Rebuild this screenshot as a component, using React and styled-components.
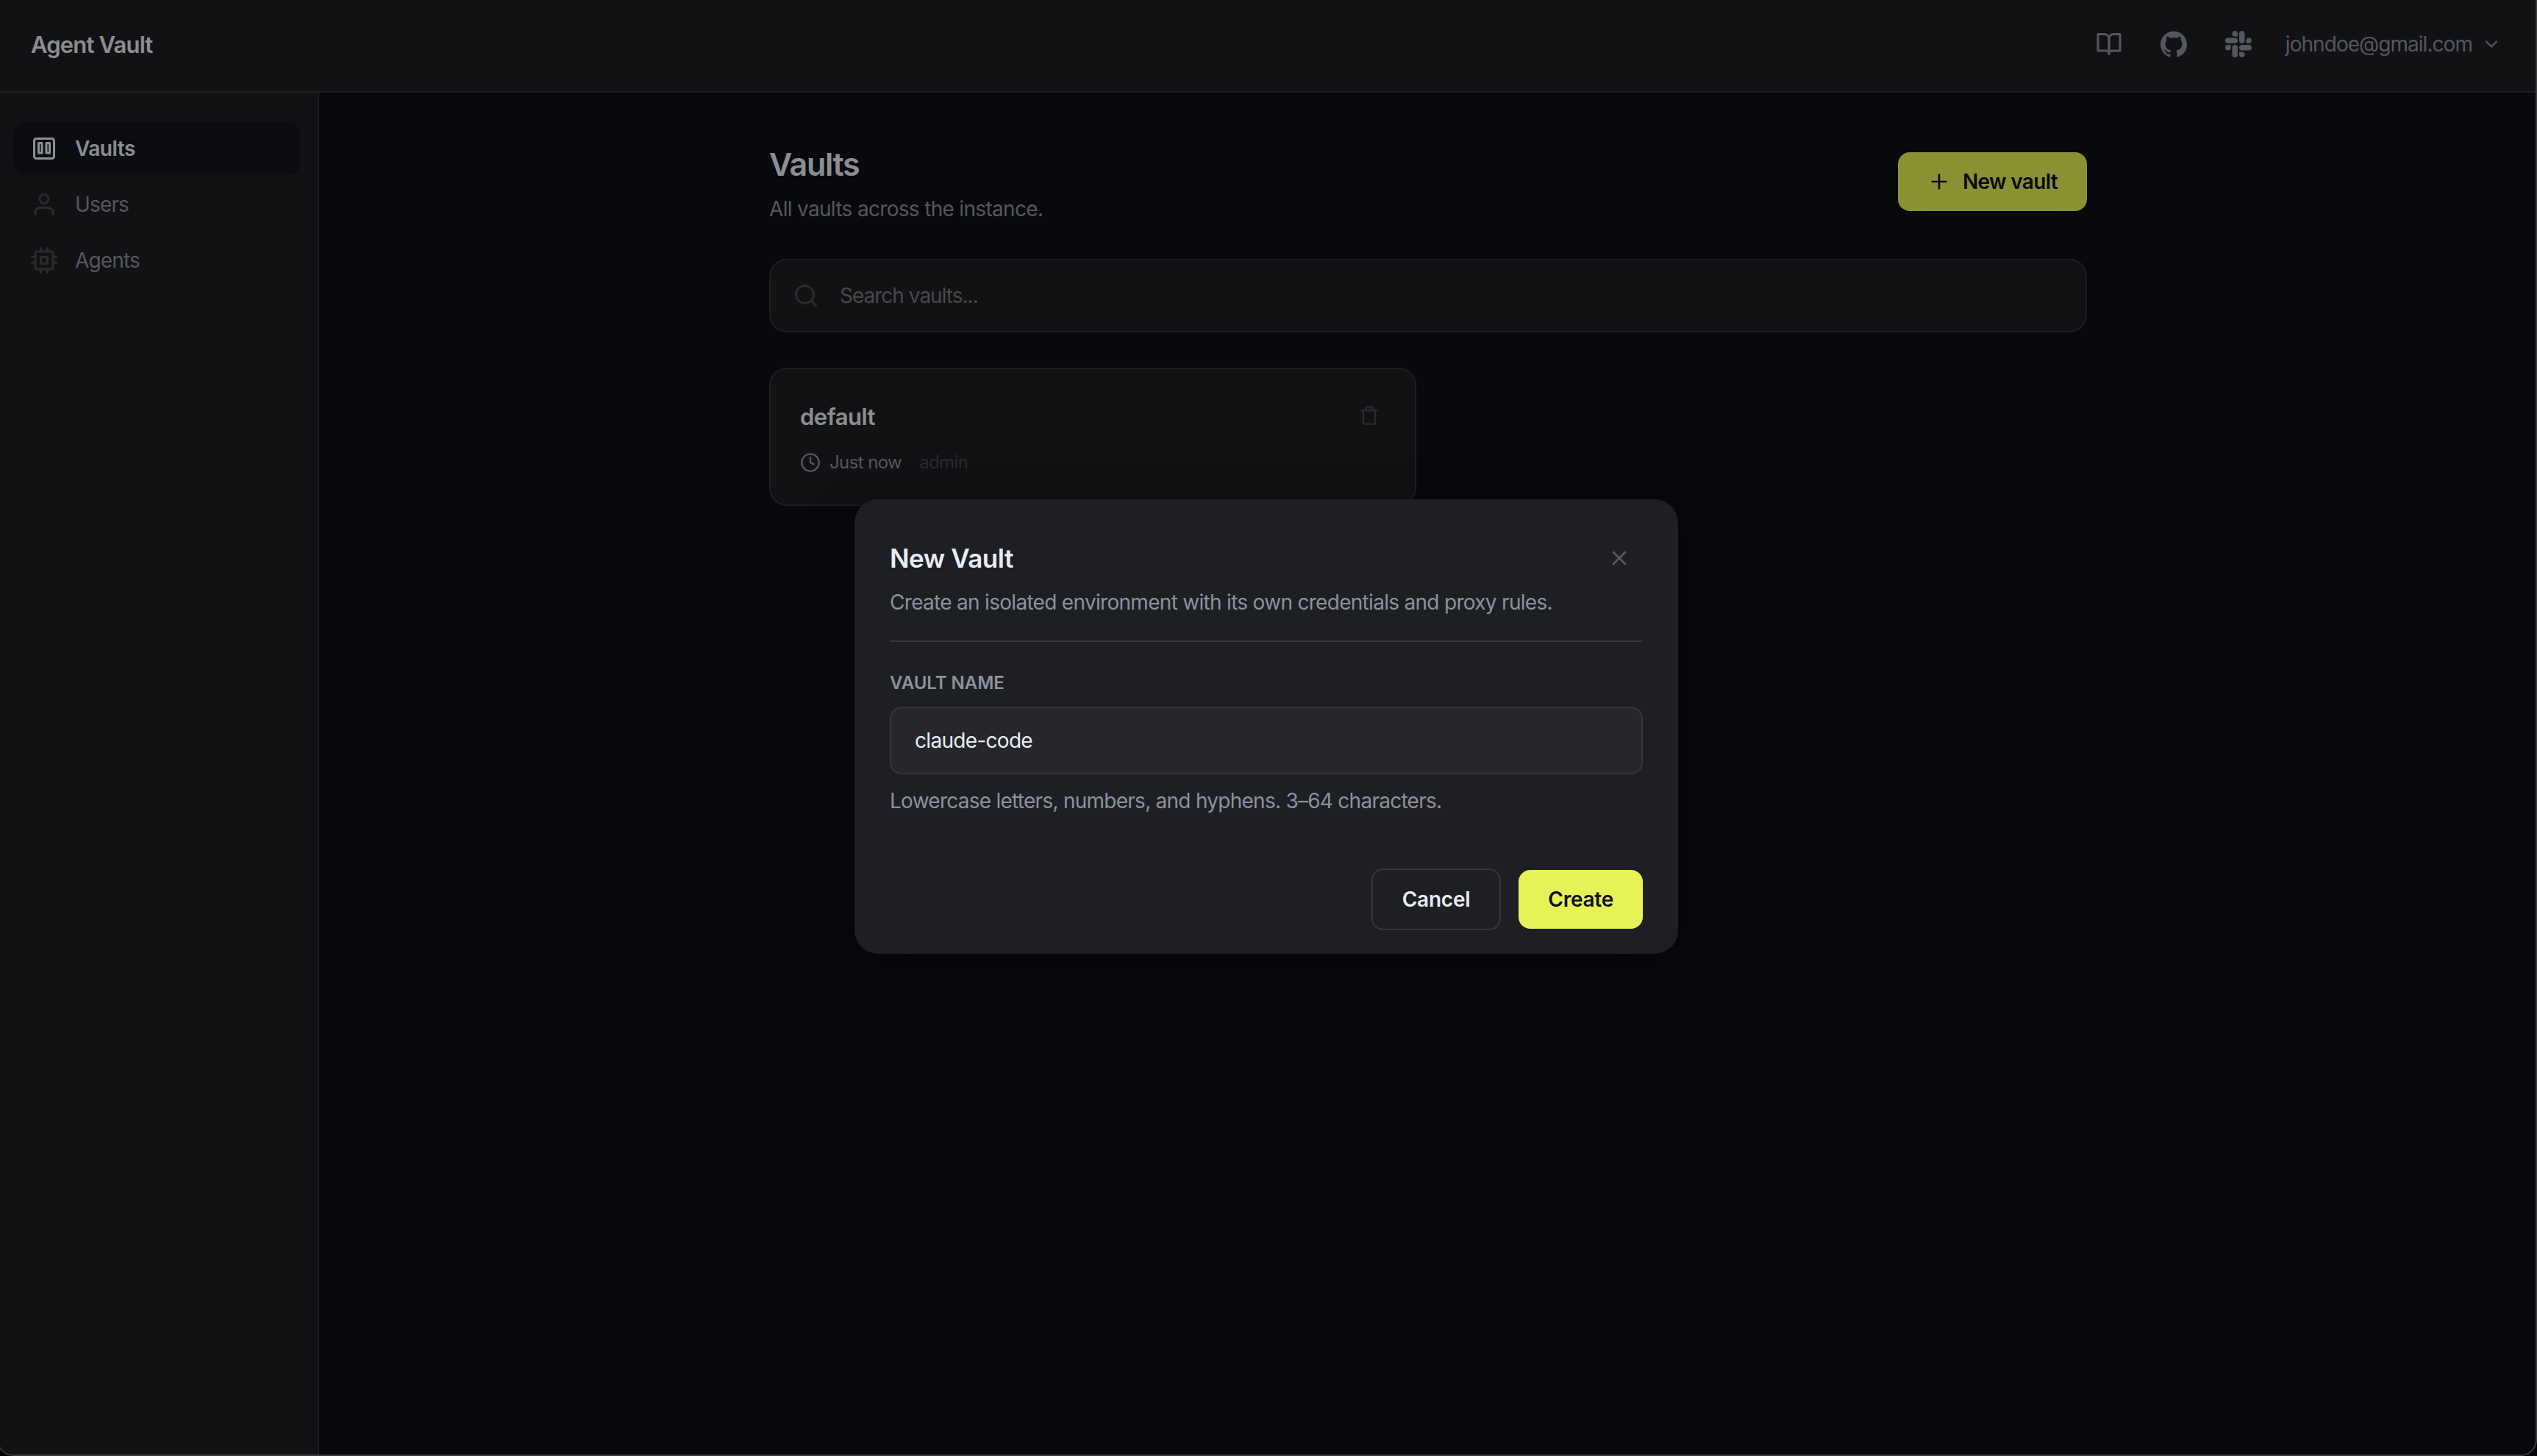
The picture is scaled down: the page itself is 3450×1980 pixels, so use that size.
import React from "react";
import styled, { createGlobalStyle, css } from "styled-components";
import { FiBookOpen, FiChevronDown, FiClock, FiCpu, FiPlus, FiSearch, FiTrash, FiUser, FiX } from "react-icons/fi";
import { SiGithub, SiSlack } from "react-icons/si";

const GlobalStyle = createGlobalStyle`
  * {
    box-sizing: border-box;
    margin: 0;
  }
  body {
    background: #000;
    overflow: hidden;
  }
  body, button, input {
    font-family: Inter, "Liberation Sans", sans-serif;
  }
`;

const Window = styled.div`
  position: relative;
  display: flex;
  flex-direction: column;
  width: 3454px;
  height: 1980px;
  margin-left: -4px;
  overflow: hidden;
  color: #e8edf5;
  background: #0d0f14;
  border: solid #3b3c3e;
  border-width: 0 2px 2px;
  border-radius: 0 0 22px 22px;
`;

const TopBar = styled.header`
  display: flex;
  flex: none;
  align-items: center;
  justify-content: space-between;
  height: 126px;
  padding: 0 46px 4px 44px;
  background: #1e1f23;
  border-bottom: 2px solid #323336;
`;

const Brand = styled.div`
  font-size: 31px;
  font-weight: 600;
  letter-spacing: -0.83px;
`;

const TopLinks = styled.nav`
  display: flex;
  align-items: center;
  gap: 52px;
  color: #8b929e;
`;

const Account = styled.div`
  display: flex;
  align-items: center;
  gap: 12px;
  margin-left: -6px;
  font-size: 28px;
  letter-spacing: -0.95px;
`;

const Body = styled.div`
  display: flex;
  flex: 1;
`;

const Sidebar = styled.aside`
  display: flex;
  flex: none;
  flex-direction: column;
  gap: 4px;
  width: 436px;
  padding: 40px 24px 0 20px;
  background: #1e1f23;
  border-right: 2px solid #323336;
`;

const NavItem = styled.a`
  display: flex;
  align-items: center;
  gap: 24px;
  height: 72px;
  padding-left: 24px;
  font-size: 28px;
  letter-spacing: -0.85px;
  color: #8b929e;
  border-radius: 16px;

  svg {
    color: #46474b;
  }

  ${(props) => props.$active && css`
    font-weight: 600;
    letter-spacing: -0.5px;
    color: #e8edf5;
    background: #15171d;

    svg {
      color: #e8edf5;
    }
  `}
`;

const Main = styled.main`
  width: 2404px;
  padding: 71px 0 0 612px;
`;

const PageHead = styled.div`
  display: flex;
  align-items: flex-start;
  justify-content: space-between;
  height: 155px;
`;

const PageTitle = styled.h1`
  font-size: 43px;
  line-height: 52px;
  font-weight: 600;
  letter-spacing: -1.3px;
`;

const PageText = styled.p`
  margin-top: 14px;
  font-size: 28px;
  line-height: 42px;
  letter-spacing: -0.68px;
  color: #8b929e;
`;

const Button = styled.button`
  display: flex;
  align-items: center;
  gap: 16px;
  height: 80px;
  padding: 0 40px;
  font-size: 28px;
  font-weight: 600;
  letter-spacing: -0.25px;
  color: #0d0f14;
  background: #e6f255;
  border: 0;
  border-radius: 16px;

  ${(props) => props.$outline && css`
    height: 84px;
    color: #e8edf5;
    background: transparent;
    border: 2px solid #35363a;
  `}
`;

const NewButton = styled(Button)`
  margin-top: 10px;
  letter-spacing: -0.67px;
`;

const SearchBox = styled.div`
  display: flex;
  align-items: center;
  gap: 28px;
  height: 100px;
  padding: 0 30px;
  font-size: 28px;
  color: #46474b;
  background: #1e1f23;
  border: 2px solid #323336;
  border-radius: 24px;
`;

const Placeholder = styled.span`
  letter-spacing: -1px;
  color: #77787b;
`;

const Grid = styled.div`
  display: grid;
  grid-template-columns: 1fr 1fr;
  gap: 32px;
  margin-top: 48px;
`;

const Card = styled.article`
  height: 188px;
  padding: 40px;
  background: #1e1f23;
  border: 2px solid #323336;
  border-radius: 24px;
`;

const CardHead = styled.div`
  display: flex;
  align-items: center;
  justify-content: space-between;
  height: 45px;
  padding-right: 8px;

  svg {
    color: #46474b;
  }
`;

const CardTitle = styled.h2`
  padding-top: 3px;
  font-size: 31px;
  font-weight: 600;
  letter-spacing: -0.5px;
`;

const CardMeta = styled.div`
  display: flex;
  align-items: center;
  margin-top: 25px;
  font-size: 24px;
  line-height: 34px;
  letter-spacing: -0.6px;
  color: #8b929e;
`;

const Age = styled.span`
  margin-left: 12px;
`;

const Role = styled.span`
  margin-left: 24px;
  color: #46474b;
`;

const Overlay = styled.div`
  position: absolute;
  inset: 0;
  display: flex;
  align-items: center;
  justify-content: center;
  padding: 0 2px 2px 0;
  background: rgba(0, 0, 0, 0.4);
`;

const Dialog = styled.section`
  width: 1120px;
  height: 618px;
  padding: 48px;
  background: #1e1f23;
  border-radius: 32px;
  box-shadow: 0 8px 60px rgba(0, 0, 0, 0.4);
`;

const DialogHead = styled.div`
  display: flex;
  align-items: center;
  justify-content: space-between;
  height: 64px;
  padding-right: 16px;

  svg {
    color: #58595d;
  }
`;

const DialogTitle = styled.h2`
  font-size: 35px;
  font-weight: 600;
  letter-spacing: -0.45px;
`;

const DialogText = styled.p`
  padding: 7px 0 31px;
  font-size: 28px;
  line-height: 42px;
  letter-spacing: -0.7px;
  color: #8b929e;
  border-bottom: 2px solid #35363a;
`;

const Label = styled.label`
  display: block;
  margin: 39px 0 15px;
  font-size: 24px;
  line-height: 34px;
  font-weight: 600;
  text-transform: uppercase;
  color: #8b929e;
`;

const Input = styled.input`
  display: block;
  width: 100%;
  height: 92px;
  padding: 0 32px;
  font-size: 28px;
  letter-spacing: -0.7px;
  color: #e8edf5;
  background: #26272b;
  border: 2px solid #35363a;
  border-radius: 16px;
  outline: none;
`;

const Hint = styled.p`
  margin-top: 15px;
  font-size: 28px;
  line-height: 42px;
  letter-spacing: -0.74px;
  color: #8b929e;
`;

const Actions = styled.div`
  display: flex;
  align-items: center;
  justify-content: flex-end;
  gap: 24px;
  margin-top: 71px;
`;

function VaultIcon() {
  return (
    <svg width="36" height="36" viewBox="0 0 24 24" fill="none" stroke="currentColor" strokeWidth="2" strokeLinejoin="round">
      <rect x="3" y="3" width="18" height="18" rx="2" />
      <rect x="7" y="7" width="3" height="9" />
      <rect x="14" y="7" width="3" height="9" />
    </svg>
  );
}

function App() {
  return (
    <>
      <GlobalStyle />
      <Window>
        <TopBar>
          <Brand>Agent Vault</Brand>
          <TopLinks>
            <FiBookOpen size={36} />
            <SiGithub size={36} />
            <SiSlack size={36} />
            <Account>
              <span>johndoe@gmail.com</span>
              <FiChevronDown size={28} />
            </Account>
          </TopLinks>
        </TopBar>
        <Body>
          <Sidebar>
            <NavItem $active><VaultIcon /><span>Vaults</span></NavItem>
            <NavItem><FiUser size={36} /><span>Users</span></NavItem>
            <NavItem><FiCpu size={36} /><span>Agents</span></NavItem>
          </Sidebar>
          <Main>
            <PageHead>
              <div>
                <PageTitle>Vaults</PageTitle>
                <PageText>All vaults across the instance.</PageText>
              </div>
              <NewButton><FiPlus size={32} />New vault</NewButton>
            </PageHead>
            <SearchBox>
              <FiSearch size={36} />
              <Placeholder>Search vaults...</Placeholder>
            </SearchBox>
            <Grid>
              <Card>
                <CardHead>
                  <CardTitle>default</CardTitle>
                  <FiTrash size={28} />
                </CardHead>
                <CardMeta>
                  <FiClock size={28} />
                  <Age>Just now</Age>
                  <Role>admin</Role>
                </CardMeta>
              </Card>
            </Grid>
          </Main>
        </Body>
        <Overlay>
          <Dialog>
            <DialogHead>
              <DialogTitle>New Vault</DialogTitle>
              <FiX size={32} />
            </DialogHead>
            <DialogText>Create an isolated environment with its own credentials and proxy rules.</DialogText>
            <Label htmlFor="vault-name">Vault name</Label>
            <Input id="vault-name" defaultValue="claude-code" />
            <Hint>Lowercase letters, numbers, and hyphens. 3–64 characters.</Hint>
            <Actions>
              <Button $outline>Cancel</Button>
              <Button>Create</Button>
            </Actions>
          </Dialog>
        </Overlay>
      </Window>
    </>
  );
}

export default App;
